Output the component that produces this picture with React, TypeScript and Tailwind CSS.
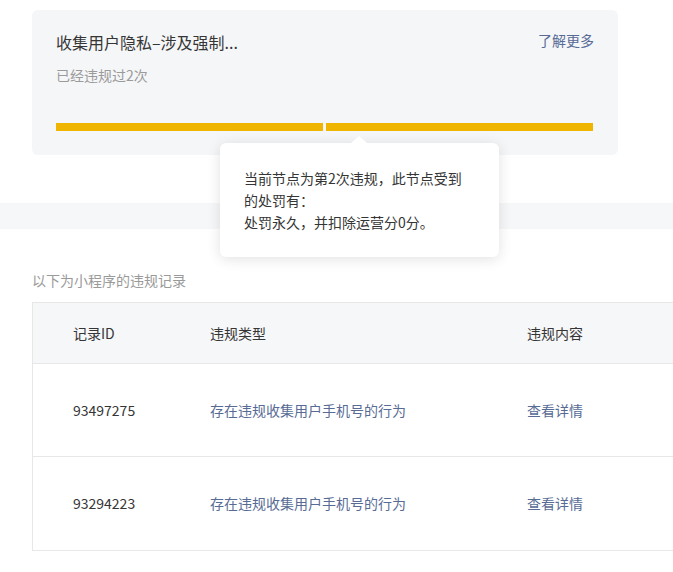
import React from "react";

const font = { fontFamily: '"Noto Sans CJK SC", "Noto Sans", sans-serif' };

export default function App() {
  const rows = [
    { id: "93497275", type: "存在违规收集用户手机号的行为" },
    { id: "93294223", type: "存在违规收集用户手机号的行为" },
  ];
  return (
    <div className="relative w-[673px] h-[572px] overflow-hidden bg-white" style={font}>
      <div className="pt-[10px] pl-[32px]">
        <div className="w-[586px] h-[145px] rounded-[6px] bg-[#f5f6f8] px-6 pt-[20px]">
          <div className="flex items-start justify-between">
            <div className="text-[16px] leading-[24px] text-[#353535]">收集用户隐私–涉及强制...</div>
            <a className="text-[14px] leading-[24px] text-[#576b95] mt-[-2px]">了解更多</a>
          </div>
          <div className="mt-[10px] text-[14px] leading-[22px] text-[#9a9a9a]">已经违规过2次</div>
          <div className="mt-[37px] flex gap-[3px] pr-[1px]">
            <div className="h-[8px] flex-1 bg-[#efb500]" />
            <div className="h-[8px] flex-1 bg-[#efb500]" />
          </div>
        </div>
      </div>

      <div className="mt-[48px] h-[26px] bg-[#f6f7f9]" />

      <div className="pl-[32px] mt-[40px] text-[14px] leading-[22px] text-[#9a9a9a]">以下为小程序的违规记录</div>

      <div className="ml-[32px] mt-[11px] w-[700px] border border-[#e7e7e7] text-[14px]">
        <div className="flex h-[61px] items-center bg-[#f6f7f9] border-b border-[#e7e7e7] text-[#353535]">
          <div className="w-[177px] pl-[40px]">记录ID</div>
          <div className="w-[317px]">违规类型</div>
          <div className="flex-1">违规内容</div>
        </div>
        {rows.map((r, i) => (
          <div
            key={r.id}
            className={`flex h-[93px] items-center ${i === 0 ? "border-b border-[#e7e7e7]" : ""}`}
          >
            <div className="w-[177px] pl-[40px] text-[#353535]">{r.id}</div>
            <div className="w-[317px] text-[#576b95]">{r.type}</div>
            <div className="flex-1 text-[#576b95]">查看详情</div>
          </div>
        ))}
      </div>

      <div className="absolute left-[220px] top-[143px] w-[279px] h-[114px] rounded-[6px] bg-white p-6 text-[14px] leading-[22px] text-[#353535] shadow-[0_2px_14px_rgba(0,0,0,0.12)]">
        <div className="absolute left-[131px] top-[-7px] h-0 w-0 border-x-[8px] border-b-[7px] border-x-transparent border-b-white" />
        当前节点为第2次违规，此节点受到
        <br />
        的处罚有：
        <br />
        处罚永久，并扣除运营分0分。
      </div>
    </div>
  );
}
